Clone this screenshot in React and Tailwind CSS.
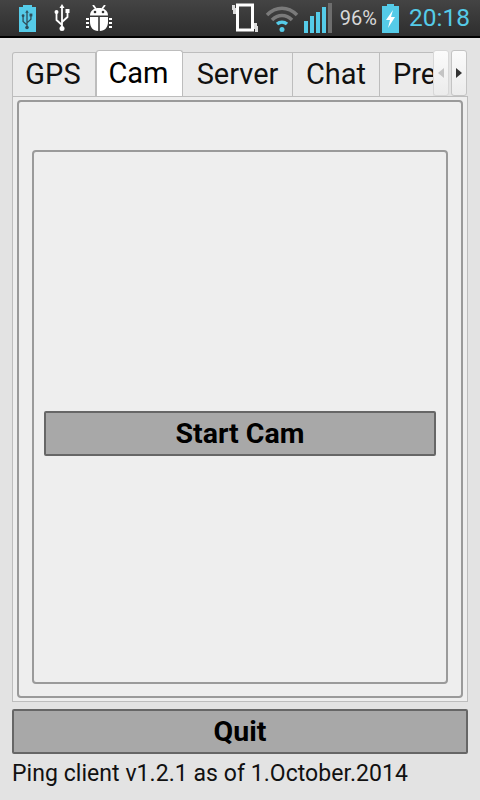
const tabs = [
  { label: "GPS", width: "w-[84px]" },
  { label: "Cam", width: "w-[87px]", active: true },
  { label: "Server", width: "w-[110px]" },
  { label: "Chat", width: "w-[87px]" },
  { label: "Preferences", width: "w-[53px]" },
];

function UsbGlyph({ color = "#fff", className }) {
  return (
    <svg className={className} viewBox="0 0 16 28" fill="none">
      <path d="M8 3v21M8 21 2.500 16v-7M8 18l5.500-5V8" stroke={color} strokeWidth="1.800" />
      <path d="M8 0l2.500 4h-5z" fill={color} />
      <circle cx="8" cy="24.500" r="2.500" fill={color} />
      <circle cx="2.500" cy="8" r="2" fill={color} />
      <rect x="11.500" y="5" width="4" height="4" fill={color} />
    </svg>
  );
}

function StatusBar() {
  return (
    <div className="flex h-[38px] shrink-0 items-center justify-between border-b-2 border-black bg-gradient-to-b from-[#444444] to-[#2e2e2e] pl-[19px] pr-[10px]">
      <div className="flex items-center">
        {/* usb battery */}
        <div className="relative h-[27px] w-[17px]">
          <svg className="h-full w-full" viewBox="0 0 17 27">
            <path d="M4 0h9v2h4v25H0V2h4z" fill="#55cbe8" />
          </svg>
          <UsbGlyph color="#2f4f5a" className="absolute left-[2px] top-[5px] h-[20px] w-[12px]" />
        </div>
        <UsbGlyph className="ml-[18px] h-[28px] w-[16px]" />
        {/* debug bug */}
        <svg className="ml-[16px] h-[27px] w-[26px]" viewBox="0 0 26 27">
          <path d="M7 0l3 4M19 0l-3 4" stroke="#fff" strokeWidth="1.800" />
          <path d="M4 10.500C4 5.500 8 3 13 3s9 2.500 9 7.500z" fill="#fff" />
          <circle cx="9" cy="7" r="1.300" fill="#333" />
          <circle cx="17" cy="7" r="1.300" fill="#333" />
          <path d="M4 12h8.200v14C7 26 4 22 4 17zM22 12h-8.200v14C19 26 22 22 22 17z" fill="#fff" />
          <path d="M0 13h3v2H0zM0 17h3v2H0zM0 21h3v2H0zM23 13h3v2h-3zM23 17h3v2h-3zM23 21h3v2h-3z" fill="#fff" />
        </svg>
      </div>
      <div className="flex items-center">
        {/* vibrate */}
        <svg className="h-[30px] w-[28px]" viewBox="0 0 28 30">
          <rect x="6.500" y="2" width="15" height="25" fill="none" stroke="#fff" strokeWidth="3" />
          <path d="M1 2h3v3h1v6H2V7H1zM23 20h3v3h1v6h-3v-3h-1z" fill="#ddd" />
        </svg>
        {/* wifi */}
        <svg className="ml-[6px] h-[28px] w-[34px]" viewBox="0 0 34 28" fill="none">
          <path d="M2 11C11 2 23 2 32 11" stroke="#7a7a7a" strokeWidth="3.500" />
          <path d="M7 16C13 10 21 10 27 16" stroke="#7a7a7a" strokeWidth="3.500" />
          <path d="M12 20c3-2.500 7-2.500 10 0" stroke="#55cbe8" strokeWidth="3.500" />
          <circle cx="17" cy="25.500" r="2.500" fill="#55cbe8" />
        </svg>
        {/* signal */}
        <svg className="ml-[5px] h-[30px] w-[28px]" viewBox="0 0 28 30">
          <rect x="0" y="18" width="4" height="12" fill="#55cbe8" />
          <rect x="6" y="13" width="4" height="17" fill="#55cbe8" />
          <rect x="12" y="9" width="4" height="21" fill="#55cbe8" />
          <rect x="18" y="4" width="4" height="26" fill="#55cbe8" />
          <rect x="24" y="0" width="4" height="30" fill="#6e6e6e" />
        </svg>
        <span className="ml-[8px] text-[20px] leading-none text-[#d8d8d8]">96%</span>
        {/* charging battery */}
        <svg className="ml-[5px] h-[29px] w-[17px]" viewBox="0 0 17 29">
          <path d="M5 0h7v2h5v27H0V2h5z" fill="#55cbe8" />
          <path d="M11 6 4 16h4l-2 8 7-11H9z" fill="#fff" />
        </svg>
        <span className="ml-[10px] text-[24.500px] leading-none text-[#55cbe8]">20:18</span>
      </div>
    </div>
  );
}

function TabBar() {
  return (
    <div className="flex h-[46px] items-end">
      <div className="flex h-full w-[421px] shrink-0 items-end overflow-hidden">
        {tabs.map((tab) => (
          <div
            key={tab.label}
            className={
              tab.active
                ? "flex h-[46px] w-[87px] shrink-0 items-center justify-center rounded-t-[3px] border-x border-t border-[#bdbdbd] bg-white pr-[2px] text-[29px] text-black"
                : `flex h-[44px] ${tab.width} shrink-0 items-center justify-center overflow-hidden border-t border-r border-[#bdbdbd] bg-[#ebebeb] text-[29px] text-[#111111] first:border-l first:rounded-tl-[3px] first:pr-[2px] last:border-r-0`
            }
          >
            <span className={tab.label === "Preferences" ? "w-full pl-[13px] whitespace-nowrap" : ""}>{tab.label}</span>
          </div>
        ))}
      </div>
      <div className="ml-auto mr-[1px] flex h-full gap-[2px]">
        <div className="flex h-[46px] w-[16px] items-center justify-center rounded-[3px] border border-[#d8d8d8] bg-gradient-to-b from-[#fbfbfb] to-[#ececec]">
          <div className="h-0 w-0 border-y-[5px] border-r-[6px] border-y-transparent border-r-[#c4c4c4]" />
        </div>
        <div className="flex h-[46px] w-[16px] items-center justify-center rounded-[3px] border border-[#c4c4c4] bg-gradient-to-b from-[#fbfbfb] to-[#ececec]">
          <div className="h-0 w-0 border-y-[5px] border-l-[6px] border-y-transparent border-l-[#333333]" />
        </div>
      </div>
    </div>
  );
}

export default function App() {
  return (
    <div className="flex h-[800px] w-[480px] flex-col overflow-hidden bg-[#e3e3e3] font-['Roboto',sans-serif]">
      <StatusBar />
      <div className="flex flex-1 flex-col px-3 pt-3">
        <TabBar />
        <div className="h-[606px] border border-[#bdbdbd] bg-[#eeeeee] px-1 pt-[3px]">
          <div className="h-[598px] rounded-[4px] border-2 border-[#9a9a9a] px-[13px] pt-[48px]">
            <div className="flex h-[534px] items-start rounded-[4px] border-2 border-[#9a9a9a] px-[10px] pt-[259px]">
              <button className="h-[45px] w-full rounded-[2px] border-2 border-[#666666] bg-[#a8a8a8] text-[28.500px] font-bold text-black">
                Start Cam
              </button>
            </div>
          </div>
        </div>
        <button className="mt-[7px] h-[45px] w-full shrink-0 rounded-[2px] border-2 border-[#666666] bg-[#a8a8a8] text-[28.500px] font-bold text-black">
          Quit
        </button>
        <p className="mt-[6px] whitespace-nowrap text-[23px] leading-[28px] tracking-[0.05px] text-[#111111]">
          Ping client v1.2.1 as of 1.October.2014
        </p>
      </div>
    </div>
  );
}
